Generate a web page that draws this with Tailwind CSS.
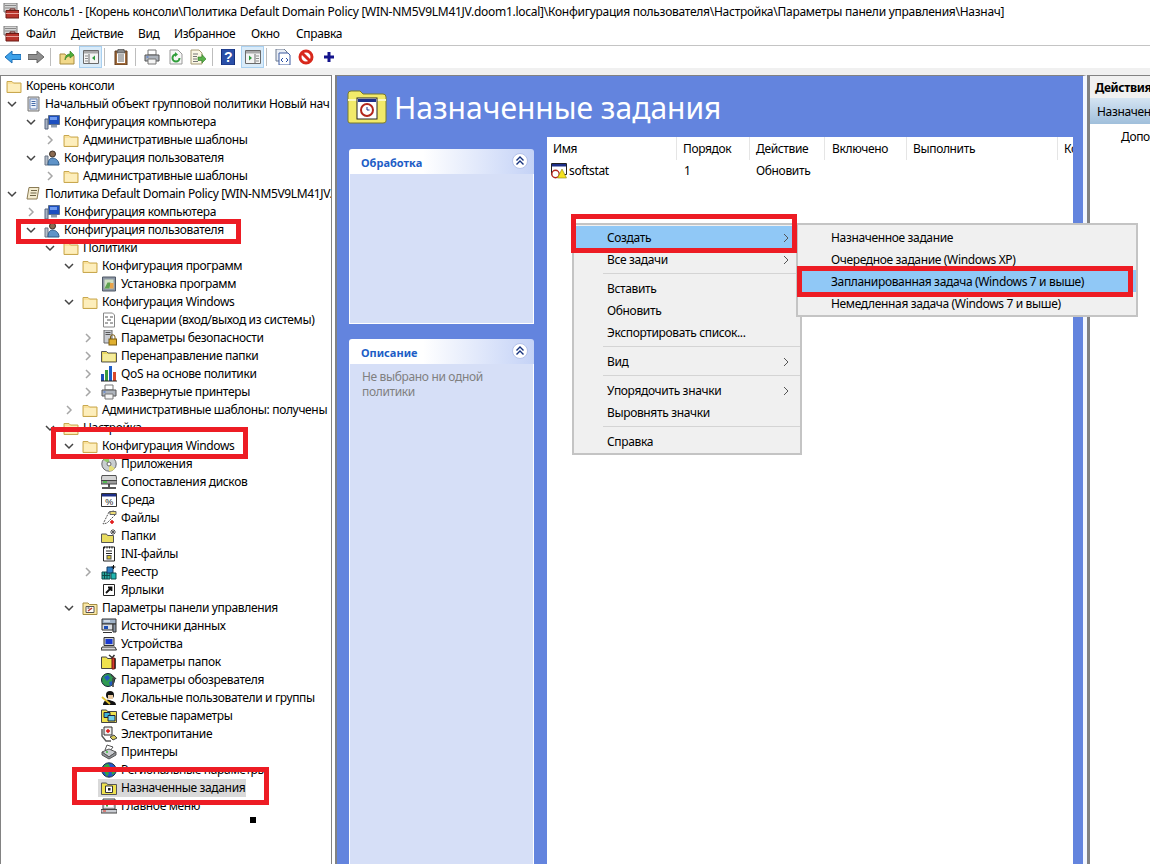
<!DOCTYPE html>
<html lang="ru">
<head>
  <meta charset="UTF-8">
  <title>Консоль1</title>
  <script src="https://cdn.jsdelivr.net/npm/@tailwindcss/browser@4"></script>
</head>
<body class="bg-white text-black text-[12px] leading-none tracking-[-0.35px] font-['Noto_Sans',sans-serif]">

<!-- shared icons -->
<svg class="hidden">
  <symbol id="down" viewBox="0 0 12 12"><path d="M2 4l4 4 4-4" fill="none" stroke="#444" stroke-width="1.5"/></symbol>
  <symbol id="right" viewBox="0 0 12 12"><path d="M4 2l4 4-4 4" fill="none" stroke="#a6a6a6" stroke-width="1.5"/></symbol>
  <symbol id="arrow" viewBox="0 0 8 10"><path d="M2 1l4 4-4 4" fill="none" stroke="#555" stroke-width="1"/></symbol>
  <symbol id="folder" viewBox="0 0 16 16"><path d="M1 3.500h5l1.500 1.500H15v9.500H1z" fill="#fbe29c" stroke="#c8a850"/><path d="M2 6h12v7.500H2z" fill="#fdeebc"/></symbol>
  <symbol id="dotfolder" viewBox="0 0 16 16"><path d="M.5 3.500h5l1.500 1.500h8.500v9H.5z" fill="#e8d860" stroke="#555"/><path d="M2 6h12v7H2z" fill="#f5ec9a"/></symbol>
  <symbol id="gpo" viewBox="0 0 16 16"><path d="M3 1h11v14H3z" fill="#d9d9d9" stroke="#777"/><path d="M5 3h7v10H5z" fill="#eef3fb" stroke="#6d86b5"/><path d="M6.500 5.500h4M6.500 7.500h4M6.500 9.500h4" stroke="#466ba8"/></symbol>
  <symbol id="scroll" viewBox="0 0 16 16"><path d="M4 1.500h10l-2 11.500H2z" fill="#f4ecd0" stroke="#8a7b55"/><path d="M6 4.500h6M5.500 7h6M5 9.500h6" stroke="#6f6648"/></symbol>
  <symbol id="comp" viewBox="0 0 16 16"><path d="M1 5h3v10H1z" fill="#aab4c4" stroke="#56657e"/><path d="M4.500 1.500h11v9h-11z" fill="#1c4fc0" stroke="#5c6f8c"/><path d="M6 3h7v3H6z" fill="#6f9bf0"/><path d="M7 11h6v2.500H7z" fill="#8d9cb0"/></symbol>
  <symbol id="user" viewBox="0 0 16 16"><path d="M1 6h3v9H1z" fill="#b6c0cc" stroke="#6a7585"/><circle cx="8.500" cy="4" r="3" fill="#8a6a50" stroke="#3d3026"/><path d="M4 15c0-5 2-7 4.500-7s6.500 2 6.500 7z" fill="#5f93c8" stroke="#2f5a85"/></symbol>
  <symbol id="install" viewBox="0 0 16 16"><path d="M1.500 1h13v14h-13z" fill="#8d97a5" stroke="#4e5866"/><path d="M3.500 3.500h9v9h-9z" fill="#cfe0c5"/><path d="M3.500 12.500l3-6h3l-1 6z" fill="#5ea14f"/><path d="M9 7h3.500v5.500H9z" fill="#e8a24a"/></symbol>
  <symbol id="script" viewBox="0 0 16 16"><path d="M2.500 1h9l2 2v12h-11z" fill="#fff" stroke="#888"/><path d="M4 5h3M9 5h3M6 8h4M4 11h3M9 11h3" stroke="#555"/></symbol>
  <symbol id="secure" viewBox="0 0 16 16"><path d="M3 0h8v13H3z" fill="#c9ccd2" stroke="#666"/><path d="M4.500 2.500h5M4.500 4.500h5" stroke="#555"/><rect x="8" y="9" width="7.500" height="6" fill="#e0b030" stroke="#7c5c10"/><path d="M9.500 9V7a2.200 2.200 0 0 1 4.500 0v2" fill="none" stroke="#7c5c10"/></symbol>
  <symbol id="qos" viewBox="0 0 16 16"><path d="M0 8h3v7H0z" fill="#1d4fb8"/><path d="M4 4h3v11H4z" fill="#3a9a3e"/><path d="M8 0h3v15H8z" fill="#1d5fc8"/><path d="M12 6h3v9h-3z" fill="#d9482b"/><path d="M0 15h16" stroke="#222"/></symbol>
  <symbol id="print" viewBox="0 0 16 16"><path d="M4 1h8v5H4z" fill="#fff" stroke="#777"/><path d="M1 6h14v6H1z" fill="#aeb4bc" stroke="#555"/><path d="M4 10h8v5H4z" fill="#f4f4f4" stroke="#777"/><path d="M2.500 8h2" stroke="#3b6fd8"/></symbol>
  <symbol id="cd" viewBox="0 0 16 16"><circle cx="8" cy="8" r="7.200" fill="#c9ced0" stroke="#666"/><path d="M8 8L2 3.500A7 7 0 0 1 8 1z" fill="#8fc96a"/><path d="M8 8l6 4.500A7 7 0 0 1 8 15z" fill="#e6e07a"/><circle cx="8" cy="8" r="2" fill="#fff" stroke="#666"/></symbol>
  <symbol id="drive" viewBox="0 0 16 16"><path d="M1 1.500h14l1 5H0z" fill="#d5d5d5" stroke="#555"/><path d="M0 6.500h16v3.500H0z" fill="#9d9d9d" stroke="#444"/><path d="M2 8h4" stroke="#3cc43c" stroke-width="1.500"/><path d="M8 10v3M1 14h14" stroke="#222" stroke-width="1.500"/></symbol>
  <symbol id="env" viewBox="0 0 16 16"><path d="M.5 1.500h15v13H.5z" fill="#fff" stroke="#333"/><path d="M1 2h14v2.500H1z" fill="#1d2f88"/><text x="8" y="13" font-size="9" text-anchor="middle" fill="#111" font-family="Liberation Sans">%</text></symbol>
  <symbol id="files" viewBox="0 0 16 16"><path d="M8 2l5-1 1 4-8 8-4 1z" fill="#fff" stroke="#555" stroke-dasharray="2 1"/><path d="M9 1.500h6v3H9z" fill="#ecdc74" stroke="#666"/><path d="M11 10v4M9 12h4" stroke="#e01010" stroke-width="1.500"/></symbol>
  <symbol id="folders2" viewBox="0 0 16 16"><path d="M.5 6h5l1 1.500h6v7H.5z" fill="#e8dc60" stroke="#555"/><path d="M12 1v6M9 4h6M10 2l4 4M14 2l-4 4" stroke="#555"/></symbol>
  <symbol id="ini" viewBox="0 0 16 16"><path d="M2.500 1h11v14h-11z" fill="#fff" stroke="#222"/><path d="M3.500 .5v2M6 .5v2M8.500 .5v2M11 .5v2M5 5h6M5 7.500h6" stroke="#222"/><rect x="6" y="9.500" width="4" height="3.500" fill="#d9c531" stroke="#555"/></symbol>
  <symbol id="reg" viewBox="0 0 16 16"><path d="M1 8h8v7H1z" fill="#27a8a0" stroke="#0d4a4a"/><path d="M3.500 8v7M6 8v7M1 11.500h8" stroke="#0d4a4a"/><path d="M6 3h6v6H6z" fill="#2d7fc4" stroke="#123a60"/><path d="M12.500 1v4M10.500 3h4" stroke="#111"/><path d="M10 9h5v6h-5z" fill="#1fb5b0" stroke="#0d4a4a"/></symbol>
  <symbol id="lnk" viewBox="0 0 16 16"><path d="M2.500 2.500h11v11h-11z" fill="#fff" stroke="#222"/><path d="M5 11l5-5M7 5.500h3.500V9" fill="none" stroke="#111" stroke-width="1.800"/></symbol>
  <symbol id="cpl" viewBox="0 0 16 16"><path d="M1 3h5l1.500 1.500H15v10H1z" fill="#fbe9a6" stroke="#a48c40"/><path d="M4 6.500h8v6H4z" fill="#fff" stroke="#555"/><path d="M6 11l4-3" stroke="#c0392b" stroke-width="1.500"/><path d="M5.500 8h2" stroke="#222"/></symbol>
  <symbol id="data" viewBox="0 0 16 16"><path d="M1 1h14v5H1z" fill="#9fb2c8" stroke="#333"/><path d="M1 6h11v6H1z" fill="#d9dde2" stroke="#333"/><path d="M3 8h4v3H3z" fill="#1d4fb8"/><path d="M3 3h6" stroke="#fff"/><path d="M12 6h3v8h-3z" fill="#8894a4" stroke="#333"/><path d="M2 14.500h9" stroke="#333"/></symbol>
  <symbol id="dev" viewBox="0 0 16 16"><path d="M3 1.500h10v8H3z" fill="#c9ccd2" stroke="#333"/><path d="M4.500 3h7v5h-7z" fill="#1a3ad0"/><path d="M1 11h13l1.500 3H0z" fill="#d9d9d9" stroke="#333"/></symbol>
  <symbol id="fopt" viewBox="0 0 16 16"><path d="M.5 3h5l1 1.500h8v10H.5z" fill="#efe24e" stroke="#444"/><path d="M8 1l3 2.500M13.500 1L11 4" stroke="#333" stroke-width="1.500"/><path d="M11 4h2.500v11H11z" fill="#d63b2f" stroke="#6a1a10"/></symbol>
  <symbol id="ie" viewBox="0 0 16 16"><circle cx="7" cy="8" r="6.500" fill="#2f9a52" stroke="#123"/><path d="M3 5l4-2 2 3-3 3zM8 10l4-1 0 3-3 2z" fill="#2059c0"/><path d="M10 3l5 4M12 6v9" stroke="#444" stroke-width="1.600"/></symbol>
  <symbol id="users" viewBox="0 0 16 16"><path d="M1 15V4l6-3 8 1v13z" fill="#fff"/><circle cx="9" cy="5" r="4" fill="#111"/><path d="M7 5h5v4H7z" fill="#e8c8a0"/><path d="M2 15c0-3 3-6 6-5s7 1 7 5z" fill="#111"/><path d="M1 7l8 7" stroke="#e0c030" stroke-width="1.800"/></symbol>
  <symbol id="net" viewBox="0 0 16 16"><path d="M.5 2h5l1 1.500h9v11H.5z" fill="#efe24e" stroke="#444"/><path d="M3 4.500h6v5H3z" fill="#3fb6d9" stroke="#223"/><path d="M7 7.500h7v5.500H7z" fill="#6fd0e8" stroke="#223"/></symbol>
  <symbol id="power" viewBox="0 0 16 16"><path d="M3 1h8v8H3z" fill="#eee" stroke="#333"/><path d="M7 3v4M5 5h4" stroke="#e01010" stroke-width="1.400"/><path d="M1 3v7l4 5h5" fill="none" stroke="#555" stroke-width="1.400"/><path d="M9 11l4-2 3 3-4 2z" fill="#d9cc5a" stroke="#444"/></symbol>
  <symbol id="prn2" viewBox="0 0 16 16"><path d="M6 1l6 2-3 4-5-1z" fill="#fff" stroke="#555"/><path d="M1 8l7-3 7 3-7 5z" fill="#c9ccd0" stroke="#555"/><path d="M1 8v3l7 4 7-4V8l-7 5z" fill="#8f9499" stroke="#555"/><path d="M5 8h2" stroke="#3cc43c" stroke-width="1.400"/></symbol>
  <symbol id="globe" viewBox="0 0 16 16"><circle cx="8" cy="8" r="7.200" fill="#2356c8" stroke="#234"/><path d="M3 3.500l4-2 2 3-3 3 2 4-2 3-3-5z" fill="#35a33f"/><path d="M10 6l4 1v4l-3 2z" fill="#35a33f"/></symbol>
  <symbol id="sched" viewBox="0 0 16 16"><path d="M.5 3h5l1 1.500h9v10H.5z" fill="#efe24e" stroke="#555"/><path d="M4.500 6h7v6.500h-7z" fill="#fff" stroke="#333"/><rect x="7" y="8" width="2.500" height="2.500" fill="#222"/></symbol>
  <symbol id="start" viewBox="0 0 16 16"><path d="M2 1h12v10H2z" fill="#d9dde2" stroke="#444"/><path d="M4 3h8v6H4z" fill="#fff"/><path d="M5 4h2v2H5z" fill="#1d4fb8"/><path d="M5 7h2v1.500H5z" fill="#3a9a3e"/><path d="M0 11.500h16v3.500H0z" fill="#c9ccd2" stroke="#444"/><path d="M2 13h3" stroke="#e03020"/></symbol>
  <symbol id="mmc" viewBox="0 0 16 16"><path d="M1 0h13v9H1z" fill="#d6d6d6" stroke="#777"/><path d="M2 2.500h11M2 5h11" stroke="#888"/><path d="M3 7.500h13V15H3z" fill="#b8352c" stroke="#6a1a14"/><path d="M7 7.500V6h5v1.500" fill="none" stroke="#6a1a14"/><path d="M3 10.500h13" stroke="#e8a09a"/></symbol>
  <symbol id="collapse" viewBox="0 0 18 18"><circle cx="9" cy="9" r="7.500" fill="#fff" stroke="#b4c2ea"/><path d="M5.500 8.500L9 5l3.500 3.500M5.500 12.500L9 9l3.500 3.500" fill="none" stroke="#17347f" stroke-width="1.400"/></symbol>
</svg>

<div class="relative w-[1150px] h-[864px] overflow-hidden">

  <!-- title bar -->
  <div class="flex items-center h-[22px] pl-[3px]">
    <svg class="w-4 h-4"><use href="#mmc"/></svg>
    <span class="ml-[4px] pt-[2px] whitespace-nowrap tracking-[-0.27px]">Консоль1 - [Корень консоли\Политика Default Domain Policy [WIN-NM5V9LM41JV.doom1.local]\Конфигурация пользователя\Настройка\Параметры панели управления\Назнач]</span>
  </div>

  <!-- menu bar -->
  <div class="flex items-center h-[23px] pl-[3px] border-b border-[#c4c4c4] box-content">
    <svg class="w-4 h-4"><use href="#mmc"/></svg>
    <span class="ml-[7px] w-[45px]">Файл</span>
    <span class="w-[67px]">Действие</span>
    <span class="w-[36px]">Вид</span>
    <span class="w-[77px]">Избранное</span>
    <span class="w-[45px]">Окно</span>
    <span>Справка</span>
  </div>

  <!-- toolbar -->
  <div class="flex items-center h-[22px] pl-[5px]">
    <svg class="w-4 h-4" viewBox="0 0 16 16"><path d="M0 8l7-6v3.500h9v5H7V14z" fill="#3ea2ea" stroke="#1f6fb5"/></svg>
    <svg class="w-4 h-4 ml-[7px]" viewBox="0 0 16 16"><path d="M16 8L9 2v3.500H0v5h9V14z" fill="#8f8f8f" stroke="#666"/></svg>
    <span class="w-px h-[18px] bg-[#bdbdbd] ml-[6px]"></span>
    <svg class="w-4 h-4 ml-[8px]" viewBox="0 0 16 16"><path d="M1 5h5l1 1.500h8V15H1z" fill="#f2d98a" stroke="#a88c3e"/><path d="M6 11c0-4 2-6 5-6V2l4 4-4 3V7c-2 0-4 1-5 4z" fill="#4fae3a" stroke="#2f7a22" stroke-width=".6"/></svg>
    <span class="flex items-center justify-center ml-[4px] w-[23px] h-[22px] bg-[#d9ebf9] border border-[#a9d0f0]">
      <svg class="w-4 h-4" viewBox="0 0 16 16"><path d="M.5 1.500h15v13H.5z" fill="#f4f4f4" stroke="#6a6a6a"/><path d="M1 2h14v2.500H1z" fill="#a9a9a9"/><path d="M6 5v9" stroke="#6a6a6a"/><path d="M12 6.500v5l-3-2.500z" fill="#2e9a3c"/><path d="M2 7h3M2 9.500h3M2 12h3" stroke="#8a8a8a"/></svg>
    </span>
    <span class="w-px h-[18px] bg-[#bdbdbd] ml-[2px]"></span>
    <svg class="w-4 h-4 ml-[8px]" viewBox="0 0 16 16"><path d="M2 2h12v14H2z" fill="#a06a3a" stroke="#5e3a1c"/><path d="M4 4h8v10H4z" fill="#fff"/><path d="M5 2V0h6v2h1v2H4V2z" fill="#888" stroke="#444" stroke-width=".6"/><path d="M5 6h6M5 8h6M5 10h6M5 12h6" stroke="#666"/></svg>
    <span class="w-px h-[18px] bg-[#bdbdbd] ml-[6px]"></span>
    <svg class="w-4 h-4 ml-[8px]" viewBox="0 0 16 16"><use href="#print"/></svg>
    <svg class="w-4 h-4 ml-[8px]" viewBox="0 0 16 16"><path d="M2 1h8l4 4v10H2z" fill="#f7f7f7" stroke="#999"/><path d="M11.500 9A3.500 3.500 0 1 1 8 5.500" fill="none" stroke="#2f9e3a" stroke-width="2"/><path d="M7 3l3 2.500L7 8z" fill="#2f9e3a"/></svg>
    <svg class="w-4 h-4 ml-[6px]" viewBox="0 0 16 16"><path d="M1 1h8l3 3v11H1z" fill="#fbf7e4" stroke="#a59a74"/><path d="M3 5h5M3 7.500h4M3 10h4M3 12.500h5" stroke="#777"/><path d="M8 8h4V5.500l4 4.500-4 4v-2.500H8z" fill="#58b04a" stroke="#2f7a22" stroke-width=".6"/></svg>
    <span class="w-px h-[18px] bg-[#bdbdbd] ml-[6px]"></span>
    <svg class="w-4 h-4 ml-[7px]" viewBox="0 0 16 16"><path d="M1.500 0h13v16h-13z" fill="#2a4fa8" stroke="#17307a"/><text x="8" y="13" font-size="14" font-weight="700" text-anchor="middle" fill="#fff" font-family="Liberation Sans">?</text></svg>
    <span class="flex items-center justify-center ml-[5px] w-[23px] h-[22px] bg-[#d9ebf9] border border-[#a9d0f0]">
      <svg class="w-4 h-4" viewBox="0 0 16 16"><path d="M.5 1.500h15v13H.5z" fill="#f4f4f4" stroke="#6a6a6a"/><path d="M1 2h14v2.500H1z" fill="#a9a9a9"/><path d="M10 5v9" stroke="#6a6a6a"/><path d="M4 6.500v5L7 9z" fill="#2e9a3c"/><path d="M11 7h3M11 9.500h3M11 12h3" stroke="#8a8a8a"/></svg>
    </span>
    <span class="w-px h-[18px] bg-[#bdbdbd] ml-[2px]"></span>
    <svg class="w-4 h-4 ml-[8px]" viewBox="0 0 16 16"><path d="M1 0h8l3 3v9H1z" fill="#e8edf5" stroke="#6d7a90"/><path d="M4 4h9l2 2v10H4z" fill="#fff" stroke="#3d5aa0"/><path d="M8 9l-2 2 2 2M11 9l2 2-2 2" fill="none" stroke="#2a4fa8"/></svg>
    <svg class="w-4 h-4 ml-[7px]" viewBox="0 0 16 16"><circle cx="8" cy="8" r="6" fill="#fff" stroke="#d8281c" stroke-width="3"/><path d="M3.500 3.500l9 9" stroke="#d8281c" stroke-width="3"/></svg>
    <svg class="w-3 h-3 ml-[9px]" viewBox="0 0 12 12"><path d="M4.500 1h3v3.500H11v3H7.500V11h-3V7.500H1v-3h3.500z" fill="#14148c"/></svg>
  </div>

  <div class="h-[7px] bg-[#f0f0f0]"></div>

  <!-- panes -->
  <div class="flex h-[789px] bg-[#f0f0f0]">

    <!-- console tree -->
    <div class="w-[332px] shrink-0 pt-[1px] bg-white border-t border-l border-r border-[#828282] overflow-hidden">
      <div class="flex items-center h-[18px] pl-[5px]"><svg class="w-4 h-4"><use href="#folder"/></svg><span class="ml-[4px]">Корень консоли</span></div>

      <div class="flex items-center h-[18px] pl-[5px] whitespace-nowrap"><svg class="w-3 h-3 mr-[7px] shrink-0"><use href="#down"/></svg><svg class="w-4 h-4 shrink-0"><use href="#gpo"/></svg><span class="ml-[4px]">Начальный объект групповой политики Новый нач</span></div>
      <div class="flex items-center h-[18px] pl-[24px]"><svg class="w-3 h-3 mr-[7px]"><use href="#down"/></svg><svg class="w-4 h-4"><use href="#comp"/></svg><span class="ml-[4px]">Конфигурация компьютера</span></div>
      <div class="flex items-center h-[18px] pl-[43px]"><svg class="w-3 h-3 mr-[7px]"><use href="#right"/></svg><svg class="w-4 h-4"><use href="#folder"/></svg><span class="ml-[4px]">Административные шаблоны</span></div>
      <div class="flex items-center h-[18px] pl-[24px]"><svg class="w-3 h-3 mr-[7px]"><use href="#down"/></svg><svg class="w-4 h-4"><use href="#user"/></svg><span class="ml-[4px]">Конфигурация пользователя</span></div>
      <div class="flex items-center h-[18px] pl-[43px]"><svg class="w-3 h-3 mr-[7px]"><use href="#right"/></svg><svg class="w-4 h-4"><use href="#folder"/></svg><span class="ml-[4px]">Административные шаблоны</span></div>

      <div class="flex items-center h-[18px] pl-[5px] whitespace-nowrap"><svg class="w-3 h-3 mr-[7px] shrink-0"><use href="#down"/></svg><svg class="w-4 h-4 shrink-0"><use href="#scroll"/></svg><span class="ml-[4px]">Политика Default Domain Policy [WIN-NM5V9LM41JV.doom1.local]</span></div>
      <div class="flex items-center h-[18px] pl-[24px]"><svg class="w-3 h-3 mr-[7px]"><use href="#right"/></svg><svg class="w-4 h-4"><use href="#comp"/></svg><span class="ml-[4px]">Конфигурация компьютера</span></div>
      <div class="flex items-center h-[18px] pl-[24px]"><svg class="w-3 h-3 mr-[7px]"><use href="#down"/></svg><svg class="w-4 h-4"><use href="#user"/></svg><span class="ml-[4px]">Конфигурация пользователя</span></div>
      <div class="flex items-center h-[18px] pl-[43px]"><svg class="w-3 h-3 mr-[7px]"><use href="#down"/></svg><svg class="w-4 h-4"><use href="#folder"/></svg><span class="ml-[4px]">Политики</span></div>
      <div class="flex items-center h-[18px] pl-[62px]"><svg class="w-3 h-3 mr-[7px]"><use href="#down"/></svg><svg class="w-4 h-4"><use href="#folder"/></svg><span class="ml-[4px]">Конфигурация программ</span></div>
      <div class="flex items-center h-[18px] pl-[100px]"><svg class="w-4 h-4"><use href="#install"/></svg><span class="ml-[4px]">Установка программ</span></div>
      <div class="flex items-center h-[18px] pl-[62px]"><svg class="w-3 h-3 mr-[7px]"><use href="#down"/></svg><svg class="w-4 h-4"><use href="#folder"/></svg><span class="ml-[4px]">Конфигурация Windows</span></div>
      <div class="flex items-center h-[18px] pl-[100px]"><svg class="w-4 h-4"><use href="#script"/></svg><span class="ml-[4px]">Сценарии (вход/выход из системы)</span></div>
      <div class="flex items-center h-[18px] pl-[81px]"><svg class="w-3 h-3 mr-[7px]"><use href="#right"/></svg><svg class="w-4 h-4"><use href="#secure"/></svg><span class="ml-[4px]">Параметры безопасности</span></div>
      <div class="flex items-center h-[18px] pl-[81px]"><svg class="w-3 h-3 mr-[7px]"><use href="#right"/></svg><svg class="w-4 h-4"><use href="#dotfolder"/></svg><span class="ml-[4px]">Перенаправление папки</span></div>
      <div class="flex items-center h-[18px] pl-[81px]"><svg class="w-3 h-3 mr-[7px]"><use href="#right"/></svg><svg class="w-4 h-4"><use href="#qos"/></svg><span class="ml-[4px]">QoS на основе политики</span></div>
      <div class="flex items-center h-[18px] pl-[81px]"><svg class="w-3 h-3 mr-[7px]"><use href="#right"/></svg><svg class="w-4 h-4"><use href="#print"/></svg><span class="ml-[4px]">Развернутые принтеры</span></div>
      <div class="flex items-center h-[18px] pl-[62px] whitespace-nowrap"><svg class="w-3 h-3 mr-[7px] shrink-0"><use href="#right"/></svg><svg class="w-4 h-4 shrink-0"><use href="#folder"/></svg><span class="ml-[4px]">Административные шаблоны: получены</span></div>
      <div class="flex items-center h-[18px] pl-[43px]"><svg class="w-3 h-3 mr-[7px]"><use href="#down"/></svg><svg class="w-4 h-4"><use href="#folder"/></svg><span class="ml-[4px]">Настройка</span></div>
      <div class="flex items-center h-[18px] pl-[62px]"><svg class="w-3 h-3 mr-[7px]"><use href="#down"/></svg><svg class="w-4 h-4"><use href="#folder"/></svg><span class="ml-[4px]">Конфигурация Windows</span></div>
      <div class="flex items-center h-[18px] pl-[100px]"><svg class="w-4 h-4"><use href="#cd"/></svg><span class="ml-[4px]">Приложения</span></div>
      <div class="flex items-center h-[18px] pl-[100px]"><svg class="w-4 h-4"><use href="#drive"/></svg><span class="ml-[4px]">Сопоставления дисков</span></div>
      <div class="flex items-center h-[18px] pl-[100px]"><svg class="w-4 h-4"><use href="#env"/></svg><span class="ml-[4px]">Среда</span></div>
      <div class="flex items-center h-[18px] pl-[100px]"><svg class="w-4 h-4"><use href="#files"/></svg><span class="ml-[4px]">Файлы</span></div>
      <div class="flex items-center h-[18px] pl-[100px]"><svg class="w-4 h-4"><use href="#folders2"/></svg><span class="ml-[4px]">Папки</span></div>
      <div class="flex items-center h-[18px] pl-[100px]"><svg class="w-4 h-4"><use href="#ini"/></svg><span class="ml-[4px]">INI-файлы</span></div>
      <div class="flex items-center h-[18px] pl-[81px]"><svg class="w-3 h-3 mr-[7px]"><use href="#right"/></svg><svg class="w-4 h-4"><use href="#reg"/></svg><span class="ml-[4px]">Реестр</span></div>
      <div class="flex items-center h-[18px] pl-[100px]"><svg class="w-4 h-4"><use href="#lnk"/></svg><span class="ml-[4px]">Ярлыки</span></div>
      <div class="flex items-center h-[18px] pl-[62px]"><svg class="w-3 h-3 mr-[7px]"><use href="#down"/></svg><svg class="w-4 h-4"><use href="#cpl"/></svg><span class="ml-[4px]">Параметры панели управления</span></div>
      <div class="flex items-center h-[18px] pl-[100px]"><svg class="w-4 h-4"><use href="#data"/></svg><span class="ml-[4px]">Источники данных</span></div>
      <div class="flex items-center h-[18px] pl-[100px]"><svg class="w-4 h-4"><use href="#dev"/></svg><span class="ml-[4px]">Устройства</span></div>
      <div class="flex items-center h-[18px] pl-[100px]"><svg class="w-4 h-4"><use href="#fopt"/></svg><span class="ml-[4px]">Параметры папок</span></div>
      <div class="flex items-center h-[18px] pl-[100px]"><svg class="w-4 h-4"><use href="#ie"/></svg><span class="ml-[4px]">Параметры обозревателя</span></div>
      <div class="flex items-center h-[18px] pl-[100px]"><svg class="w-4 h-4"><use href="#users"/></svg><span class="ml-[4px]">Локальные пользователи и группы</span></div>
      <div class="flex items-center h-[18px] pl-[100px]"><svg class="w-4 h-4"><use href="#net"/></svg><span class="ml-[4px]">Сетевые параметры</span></div>
      <div class="flex items-center h-[18px] pl-[100px]"><svg class="w-4 h-4"><use href="#power"/></svg><span class="ml-[4px]">Электропитание</span></div>
      <div class="flex items-center h-[18px] pl-[100px]"><svg class="w-4 h-4"><use href="#prn2"/></svg><span class="ml-[4px]">Принтеры</span></div>
      <div class="flex items-center h-[18px] pl-[100px]"><svg class="w-4 h-4"><use href="#globe"/></svg><span class="ml-[4px]">Региональные параметры</span></div>
      <div class="flex items-center h-[18px] ml-[97px] pl-[3px] w-[148px] bg-[#d9d9d9] whitespace-nowrap"><svg class="w-4 h-4 shrink-0"><use href="#sched"/></svg><span class="ml-[4px]">Назначенные задания</span></div>
      <div class="flex items-center h-[18px] pl-[100px]"><svg class="w-4 h-4"><use href="#start"/></svg><span class="ml-[4px]">Главное меню</span></div>
    </div>

    <div class="w-[3px] shrink-0 bg-white"></div>

    <!-- result pane -->
    <div class="flex flex-col w-[752px] shrink-0 border-l-2 border-t border-[#828282] border-r-[4px] border-r-[#f2f6ff] bg-[#6384de] overflow-hidden">
      <div class="flex items-center h-[61px] shrink-0 pl-[10px]">
        <svg class="w-[40px] h-[34px] shrink-0" viewBox="0 0 40 34">
          <path d="M1 4q0-3 3-3h9l3 3h20q3 0 3 3v24q0 2-3 2H3q-2 0-2-2z" fill="#f2ea6a" stroke="#7b7a2a"/>
          <path d="M1 10h38" stroke="#fbf8c2" stroke-width="2"/>
          <rect x="10" y="8" width="20" height="21" fill="#fff" stroke="#222"/>
          <rect x="11" y="9" width="18" height="3" fill="#1d2f88"/>
          <circle cx="20" cy="20" r="6" fill="#fff" stroke="#b3261c" stroke-width="2"/>
          <path d="M20 17v3h2.500" fill="none" stroke="#1d2f88"/>
        </svg>
        <span class="ml-[7px] mt-[2px] text-white text-[30px] leading-none tracking-[0px]">Назначенные задания</span>
      </div>

      <div class="flex flex-1 min-h-0">
        <!-- task cards -->
        <div class="flex flex-col w-[185px] shrink-0 ml-[12px] pt-[12px] gap-[15px]">
          <div class="h-[175px] flex flex-col">
            <div class="flex items-center justify-between h-[25px] pl-[12px] pr-[5px] rounded-t-[3px] bg-gradient-to-r from-white from-40% to-[#c4d2f6]">
              <span class="text-[11px] font-bold tracking-[0px] text-[#215dc6] mt-[1px]">Обработка</span>
              <svg class="w-[18px] h-[18px] -mt-[1px]"><use href="#collapse"/></svg>
            </div>
            <div class="flex-1 bg-[#d6dff7] border-x border-b border-white"></div>
          </div>
          <div class="flex-1 flex flex-col">
            <div class="flex items-center justify-between h-[25px] shrink-0 pl-[12px] pr-[5px] rounded-t-[3px] bg-gradient-to-r from-white from-40% to-[#c4d2f6]">
              <span class="text-[11px] font-bold tracking-[0px] text-[#215dc6] mt-[1px]">Описание</span>
              <svg class="w-[18px] h-[18px] -mt-[1px]"><use href="#collapse"/></svg>
            </div>
            <div class="flex-1 bg-[#d6dff7] border-x border-white pl-[12px] pt-[5px] text-[#808080] leading-[15px]">Не выбрано ни одной<br>политики</div>
          </div>
        </div>

        <!-- task list -->
        <div class="w-[526px] shrink-0 ml-[13px] bg-white overflow-hidden">
          <div class="flex h-[23px] whitespace-nowrap">
            <div class="w-[130px] pl-[6px] pt-[1px] flex items-center border-r border-[#e5e5e5]">Имя</div>
            <div class="w-[73px] pl-[6px] pt-[1px] flex items-center border-r border-[#e5e5e5]">Порядок</div>
            <div class="w-[75px] pl-[6px] pt-[1px] flex items-center border-r border-[#e5e5e5]">Действие</div>
            <div class="w-[82px] pl-[7px] pt-[1px] flex items-center border-r border-[#e5e5e5]">Включено</div>
            <div class="w-[151px] pl-[6px] pt-[1px] flex items-center border-r border-[#e5e5e5]">Выполнить</div>
            <div class="w-[15px] pl-[6px] pt-[1px] flex items-center overflow-hidden">Комментарий</div>
          </div>
          <div class="flex items-center h-[22px] whitespace-nowrap">
            <div class="w-[130px] pl-[4px] flex items-center">
              <svg class="w-4 h-4" viewBox="0 0 16 16"><path d="M.5 .5h15v11H.5z" fill="#fff" stroke="#222"/><path d="M1 1h14v2.500H1z" fill="#1d2f88"/><circle cx="4.500" cy="11" r="3.700" fill="#fff" stroke="#b3261c" stroke-width="1.400"/><path d="M11 6l4.500 9h-9z" fill="#f5e21f" stroke="#8c7f10" stroke-width=".6"/></svg>
              <span class="ml-[2px]">softstat</span>
            </div>
            <div class="w-[73px] pl-[7px]">1</div>
            <div class="w-[75px] pl-[6px]">Обновить</div>
          </div>
        </div>
      </div>
    </div>

    <!-- actions pane -->
    <div class="flex-1 min-w-0 bg-white border-t border-l-[3px] border-[#828282] overflow-hidden whitespace-nowrap">
      <div class="flex items-center h-[22px] pl-[5px] pt-[2px] bg-[#f0f0f0] font-bold">Действия</div>
      <div class="flex items-center h-[26px] pl-[7px] pt-[2px] bg-gradient-to-b from-[#d5e4f2] to-[#a0bfdb]">Назначенные задания</div>
      <div class="flex items-center h-[24px] pl-[31px] pt-[2px]">Дополнительные действия</div>
    </div>
  </div>

  <!-- context menu -->
  <div class="absolute left-[572px] top-[223px] w-[230px] h-[232px] pt-[1px] bg-[#f0f0f0] border-2 border-[#c4c4c4]">
    <div class="flex items-center h-[22px] pl-[33px] pr-[10px] pt-[1px] bg-[#90c8f6]">Создать<svg class="w-2 h-2.5 ml-auto"><use href="#arrow"/></svg></div>
    <div class="flex items-center h-[22px] pl-[33px] pr-[10px] pt-[1px]">Все задачи<svg class="w-2 h-2.5 ml-auto"><use href="#arrow"/></svg></div>
    <div class="h-[7px] ml-[29px] flex items-center"><span class="w-full h-px bg-[#d4d4d4]"></span></div>
    <div class="flex items-center h-[22px] pl-[33px] pt-[1px]">Вставить</div>
    <div class="flex items-center h-[22px] pl-[33px] pt-[1px]">Обновить</div>
    <div class="flex items-center h-[22px] pl-[33px] pt-[1px]">Экспортировать список...</div>
    <div class="h-[7px] ml-[29px] flex items-center"><span class="w-full h-px bg-[#d4d4d4]"></span></div>
    <div class="flex items-center h-[22px] pl-[33px] pr-[10px] pt-[1px]">Вид<svg class="w-2 h-2.5 ml-auto"><use href="#arrow"/></svg></div>
    <div class="h-[7px] ml-[29px] flex items-center"><span class="w-full h-px bg-[#d4d4d4]"></span></div>
    <div class="flex items-center h-[22px] pl-[33px] pr-[10px] pt-[1px]">Упорядочить значки<svg class="w-2 h-2.5 ml-auto"><use href="#arrow"/></svg></div>
    <div class="flex items-center h-[22px] pl-[33px] pt-[1px]">Выровнять значки</div>
    <div class="h-[7px] ml-[29px] flex items-center"><span class="w-full h-px bg-[#d4d4d4]"></span></div>
    <div class="flex items-center h-[22px] pl-[33px] pt-[1px]">Справка</div>
  </div>

  <!-- submenu -->
  <div class="absolute left-[796px] top-[223px] w-[342px] h-[94px] pt-[1px] bg-[#f0f0f0] border-2 border-[#c4c4c4]">
    <div class="flex items-center h-[22px] pl-[33px] pt-[1px]">Назначенное задание</div>
    <div class="flex items-center h-[22px] pl-[33px] pt-[1px]">Очередное задание (Windows XP)</div>
    <div class="flex items-center h-[22px] pl-[33px] pt-[1px] bg-[#90c8f6]">Запланированная задача (Windows 7 и выше)</div>
    <div class="flex items-center h-[22px] pl-[33px] pt-[1px]">Немедленная задача (Windows 7 и выше)</div>
  </div>

  <!-- red annotation frames -->
  <div class="absolute left-[16px] top-[219px] w-[225px] h-[25px] border-[5px] border-[#ed1c24]"></div>
  <div class="absolute left-[51px] top-[427px] w-[197px] h-[32px] border-[5px] border-[#ed1c24]"></div>
  <div class="absolute left-[72px] top-[767px] w-[197px] h-[38px] border-[5px] border-[#ed1c24]"></div>
  <div class="absolute left-[571px] top-[214px] w-[226px] h-[39px] border-[5px] border-[#ed1c24]"></div>
  <div class="absolute left-[797px] top-[266px] w-[336px] h-[31px] border-[5px] border-[#ed1c24]"></div>
  <div class="absolute left-[250px] top-[817px] w-[6px] h-[6px] bg-black"></div>
</div>
</body>
</html>
